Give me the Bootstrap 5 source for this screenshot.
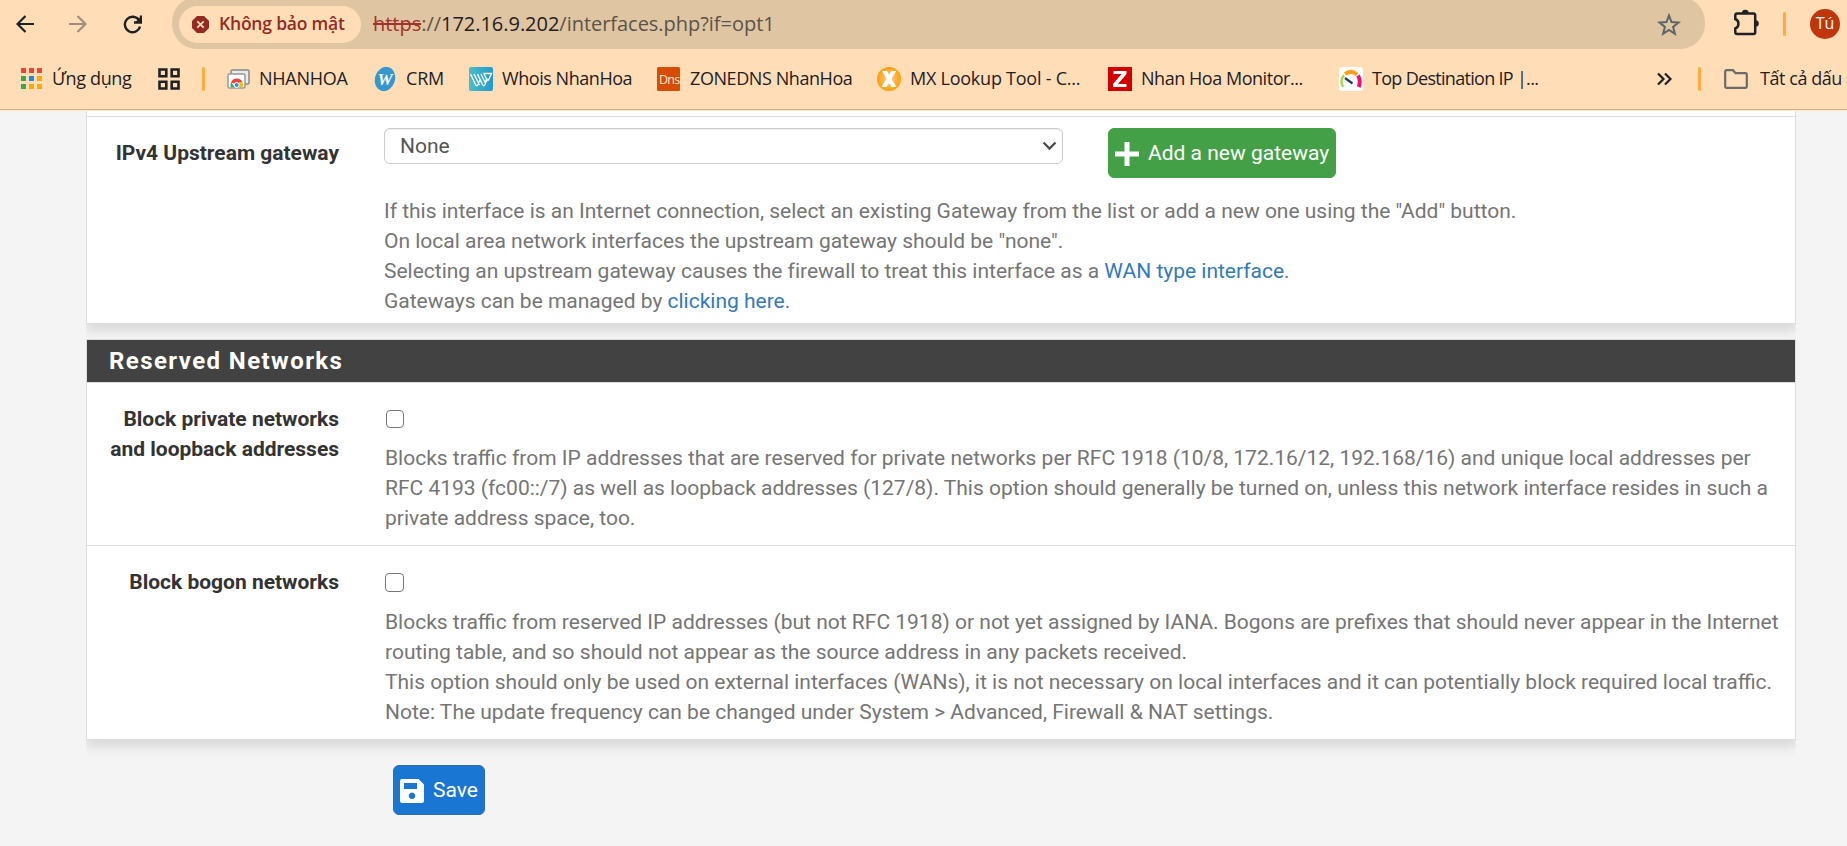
<!DOCTYPE html>
<html lang="vi">
<head>
<meta charset="utf-8">
<title>Interfaces</title>
<link href="https://cdn.jsdelivr.net/npm/bootstrap@5.3.0/dist/css/bootstrap.min.css" rel="stylesheet">
<style>
body{background:#f4f4f4;font-family:Roboto,"Liberation Sans",sans-serif;font-size:21px;line-height:30px;color:#333;height:846px;overflow:hidden}
.chrome{background:#ffdeb7;height:111px;border-bottom:1px solid #ffe6c8;font-family:"Open Sans","Noto Sans",sans-serif;color:#1f2023}
.chrome-in{height:110px;border-bottom:1px solid #d3af8d}
.toolbar-row{height:48px}
.toolbar-row svg,.marks svg{flex:none;display:block}
.omni{width:1533px;margin-left:172px;background:#dfc5a1;border-radius:25px;padding:3px 24px 1px 7px;height:52px;margin-top:-3px;margin-bottom:-1px}
.navs{width:172px;margin-right:-172px;padding-left:16px}
.chip{width:182px;height:37px;border-radius:19px;background:#ffdeb7;color:#932a24;font-weight:600;font-size:17.5px;padding-left:13px;letter-spacing:-.2px}
.url{font-size:20px;margin-left:12px;color:#5b5349;letter-spacing:-.03px;padding-bottom:1px}
.url s{color:#a1332b}
.url b{font-weight:400;color:#1f2023}
.chip-t{padding-bottom:2px}
.vbar{width:3px;height:24px;border-radius:2px;background:#ffab40;flex:none}
.avatar{width:30px;height:30px;border-radius:50%;background:#bf360c;color:#fff;font-size:16px;line-height:28px}
.marks{height:61px;font-size:18px;padding-left:21px;white-space:nowrap;display:grid;align-items:center;grid-template-columns:137px 44px 25px 147px 95px 188px 220px 231px 231px 318px 41px 26px 123px}
.marks>div{display:flex;align-items:center}
.marks span{padding-bottom:2px}
.shell{width:1710px;margin-left:86px}
.pnl{background:#fff;border:1px solid #ddd;box-shadow:0 6px 12px rgba(0,0,0,.13);clip-path:inset(0 0 -20px 0)}
.pnl-title{background:#424242;color:#fff;height:43px;border-bottom:1px solid #ddd;font-weight:700;font-size:24px;line-height:43px;letter-spacing:1.42px;padding-left:22px}
.lbl{width:252px;font-weight:700;text-align:right;flex:none;letter-spacing:-.01px}
.hlp{color:#757575}
.hlp a{color:#337ab7;text-decoration:none}
.hlp-up{letter-spacing:-.01px}
.sel{width:679px;height:36px;border:1px solid #ccc;border-radius:6px;box-shadow:inset 0 1px 1px rgba(0,0,0,.075);color:#555;padding:0 5px 0 15px;line-height:32px}
.cbx{width:18px;height:18px;border:1.500px solid #767676;border-radius:4px;background:#fff;appearance:none;display:block;margin:0 0 0 .5px}
.cbx-lg{width:19px;height:19px;margin-left:0}
.act{height:50px;border-radius:6px;color:#fff!important;font-size:21px;line-height:30px;padding:0 6px;border:1px solid #43a047;background:#43a047!important}
.act-save{background:#1976d2!important;border-color:#2e6da4}
</style>
</head>
<body>
<header class="chrome"><div class="chrome-in">
<div class="toolbar-row d-flex align-items-center">
 <div class="navs d-flex align-items-center">
  <svg width="18" height="18" viewBox="0 0 18 18" fill="none" stroke="#1f2023" stroke-width="2.2"><path d="M18 9H2M9.500 1L1.500 9l8 8"/></svg>
  <svg class="ms-auto" style="margin-right:36px" width="18" height="18" viewBox="0 0 18 18" fill="none" stroke="#a38d76" stroke-width="2.2"><path d="M0 9h16M8.500 1l8 8-8 8"/></svg>
  <svg style="margin-right:30px" width="19" height="19" viewBox="0 0 19 19" fill="none" stroke="#1f2023" stroke-width="2.4"><path d="M16 5.200A7.700 7.700 0 1 0 17 11.500"/><path d="M11 7.500h7V.5"/><path d="M17.500 2v5h-5z" fill="#1f2023" stroke="none"/></svg>
 </div>
 <div class="omni d-flex align-items-center flex-shrink-0">
  <div class="chip d-flex align-items-center">
   <svg width="17" height="17" viewBox="0 0 17 17" style="margin-right:10px"><path d="M5 0h7l5 5v7l-5 5H5l-5-5V5z" fill="#932a24"/><path d="M5.300 5.300l6.400 6.400M11.700 5.300l-6.400 6.400" stroke="#ffdeb7" stroke-width="1.8"/></svg>
   <span class="chip-t">Không bảo mật</span></div>
  <div class="url"><s>https</s>://<b>172.16.9.202</b>/interfaces.php?if=opt1</div>
  <svg class="ms-auto" width="24" height="23" viewBox="0 0 24 23" fill="none" stroke="#5f6368" stroke-width="2"><path d="M12 2.500l2.500 6.500 7 .5-5.400 4.400 1.800 6.900L12 17l-5.900 3.800 1.800-6.900L2.500 9.500l7-.5z"/></svg>
 </div>
 <svg style="margin-left:29px;margin-top:-3px" width="25" height="27" viewBox="0 0 25 27"><path d="M2.800 4.500h16.900a1.500 1.500 0 0 1 1.500 1.500v17.500a1.500 1.500 0 0 1-1.500 1.500H2.800a1.500 1.500 0 0 1-1.500-1.500V19.500c4.200-1.500 4.200-8 0-9.500V6a1.500 1.500 0 0 1 1.500-1.500z" fill="none" stroke="#1f2023" stroke-width="2.500"/><path d="M8 4a3.300 3.300 0 0 1 6.600 0zM21.500 11.200a3.300 3.300 0 0 1 0 6.600z" fill="#1f2023"/></svg>
 <div class="vbar" style="margin-left:24px"></div>
 <div class="avatar text-center flex-shrink-0" style="margin-left:24px">Tú</div>
</div>
<div class="marks">
 <div><svg width="21" height="21" viewBox="0 0 21 21"><path fill="#f44336" d="M0 0h5v5H0zM8 0h5v5H8zM16 0h5v5h-5z"/><path fill="#34a853" d="M0 8h5v5H0zM0 16h5v5H0z"/><path fill="#1e88e5" d="M8 8h5v5H8z"/><path fill="#f9ab00" d="M16 8h5v5h-5zM8 16h5v5H8zM16 16h5v5h-5z"/></svg><span style="margin-left:10px;letter-spacing:-.35px">Ứng dụng</span></div>
 <div><svg width="22" height="22" viewBox="0 0 22 22" fill="none" stroke="#1f2023" stroke-width="2.600"><path d="M1.500 1.500h6.800v6.800H1.500zM13.700 1.500h6.800v6.800h-6.800zM1.500 13.700h6.800v6.800H1.500zM13.700 13.700h6.800v6.800h-6.800z"/></svg></div>
 <div><div class="vbar"></div></div>
 <div><svg width="23" height="20" viewBox="0 0 23 20"><rect x="4" y="1" width="18" height="14" rx="1.500" fill="#e8eaed" stroke="#888" stroke-width="1.500"/><rect x="1" y="5" width="17" height="14" rx="1.500" fill="#fff" stroke="#999" stroke-width="1.500"/><path d="M4 13.500a6.200 6.200 0 0 1 11.500 0l-5.700 2z" fill="#ea4335"/><path d="M4 18.300a6 6 0 0 1 0-5l4 5z" fill="#34a853"/><path d="M15.300 13a6 6 0 0 1 .2 5.300H11l1-5.300z" fill="#fbbc04"/><circle cx="9.700" cy="16" r="2.500" fill="#4285f4" stroke="#fff"/></svg><span style="margin-left:9px;letter-spacing:-.25px">NHANHOA</span></div>
 <div><svg width="22" height="24" viewBox="0 0 22 24"><ellipse cx="11" cy="12" rx="10" ry="12.300" transform="rotate(18 11 12)" fill="#3498cf"/><text x="11" y="18" text-anchor="middle" font-family="Liberation Serif,serif" font-style="italic" font-weight="700" font-size="17" fill="#fff">W</text></svg><span style="margin-left:10px;letter-spacing:-.2px">CRM</span></div>
 <div><svg width="24" height="24" viewBox="0 0 24 24"><defs><linearGradient id="wg"><stop stop-color="#4dbdc3"/><stop offset="1" stop-color="#2199cf"/></linearGradient></defs><rect width="24" height="24" rx="2" fill="url(#wg)"/><path d="M1.500 7l5 10.500q1.300 2.500 2.500 0L11.500 12M5 7l5.500 11M8.500 7l5 10.500q1.300 2.500 2.500 0l2-4.500h1.500l3-6.500H15l2.500 5.500M12 7l4 8.500L18 11" fill="none" stroke="#fff" stroke-width="1.300"/></svg><span style="margin-left:9px;letter-spacing:-.45px">Whois NhanHoa</span></div>
 <div><svg width="23" height="24" viewBox="0 0 23 24"><rect width="23" height="24" rx="1.500" fill="#d64d00"/><text x="2" y="16.500" letter-spacing="-.8" font-size="12.500" font-family="Open Sans,sans-serif" fill="#ffe6d5">Dns</text></svg><span style="margin-left:10px;letter-spacing:-.42px">ZONEDNS NhanHoa</span></div>
 <div><svg width="24" height="24" viewBox="0 0 24 24"><defs><radialGradient id="xg"><stop stop-color="#ffd596"/><stop offset="1" stop-color="#ff9d0a"/></radialGradient></defs><circle cx="12" cy="12" r="12" fill="url(#xg)"/><path d="M5 4h5l2 4 2-4h5l-4.500 8 5 8h-5L12 16l-2.500 4h-5l5-8z" fill="#fff"/></svg><span style="margin-left:9px;letter-spacing:-.24px">MX Lookup Tool - C...</span></div>
 <div><svg width="24" height="24" viewBox="0 0 24 24"><path fill="#d40000" d="M0 0h24v24H0z"/><path d="M5.500 4h13v3L10 17h8.500v3H5v-3L13.500 7h-8z" fill="#fff"/></svg><span style="margin-left:9px;letter-spacing:-.46px">Nhan Hoa Monitor...</span></div>
 <div><svg width="24" height="24" viewBox="0 0 24 24" fill="none"><rect width="24" height="24" rx="3" fill="#fff"/><path d="M4 20Q.5 13.500 5 8" stroke="#a6d13a" stroke-width="2.200"/><path d="M6 7q6-4.500 12 .5" stroke="#ff9f1a" stroke-width="4"/><path d="M19 8.500q3 5 .8 11.500" stroke="#f5106b" stroke-width="4"/><path d="M6 11l7.500 5.500" stroke="#26375f" stroke-width="2.200"/></svg><span style="margin-left:9px;letter-spacing:-.7px">Top Destination IP |...</span></div>
 <div><svg width="15" height="14" viewBox="0 0 15 14" fill="none" stroke="#1f2023" stroke-width="2.200"><path d="M1 1.500L6.500 7 1 12.500M8 1.500L13.500 7 8 12.500"/></svg></div>
 <div><div class="vbar"></div></div>
 <div><svg width="24" height="20" viewBox="0 0 24 20" fill="none" stroke="#6b6b6b" stroke-width="2.200"><path d="M2.500 1.200h6.500l2.500 3h10a1.300 1.300 0 0 1 1.300 1.300V17.500a1.300 1.300 0 0 1-1.300 1.300h-19a1.300 1.300 0 0 1-1.300-1.300V2.500a1.300 1.300 0 0 1 1.300-1.300z"/></svg><span style="margin-left:12px;letter-spacing:-.45px">Tất cả dấu</span></div>
</div>
</div></header>
<main class="shell">
 <section class="pnl border-top-0">
  <div style="height:5px"></div>
  <div class="border-top d-flex" style="height:207px;padding-top:11px;border-color:#ddd!important">
   <div class="lbl" style="padding-top:10px">IPv4 Upstream gateway</div>
   <div style="margin-left:45px">
    <div class="d-flex" style="height:68px">
     <div class="sel d-flex align-items-center"><span>None</span><svg class="ms-auto" width="15" height="10" viewBox="0 0 15 10" fill="none" stroke="#4b4b4b" stroke-width="2.300"><path d="M1.500 1.500l6 6 6-6"/></svg></div>
     <a class="btn act d-flex align-items-center" style="margin-left:45px" href="#"><svg width="24" height="24" viewBox="0 0 24 24" style="margin:2px 9px 0 0"><path d="M9.500 0h5v9.500H24v5h-9.500V24h-5v-9.500H0v-5h9.500z" fill="#fff"/></svg>Add a new gateway</a>
    </div>
    <div class="hlp hlp-up">If this interface is an Internet connection, select an existing Gateway from the list or add a new one using the "Add" button.<br>On local area network interfaces the upstream gateway should be "none".<br>Selecting an upstream gateway causes the firewall to treat this interface as a <a href="#">WAN type interface</a>.<br>Gateways can be managed by <a href="#">clicking here</a>.</div>
   </div>
  </div>
 </section>
 <section class="pnl" style="margin-top:15px">
  <div class="pnl-title">Reserved Networks</div>
  <div class="d-flex" style="height:162px;padding-top:21px">
   <div class="lbl">Block private networks<br>and loopback addresses</div>
   <div style="margin-left:46px;padding-top:6px"><input type="checkbox" class="cbx"><div class="hlp text-nowrap" style="margin-top:15px">Blocks traffic from IP addresses that are reserved for private networks per RFC 1918 (10/8, 172.16/12, 192.168/16) and unique local addresses per<br>RFC 4193 (fc00::/7) as well as loopback addresses (127/8). This option should generally be turned on, unless this network interface resides in such a<br>private address space, too.</div></div>
  </div>
  <div class="d-flex border-top" style="height:194px;padding-top:21px;border-color:#ddd!important">
   <div class="lbl">Block bogon networks</div>
   <div style="margin-left:46px;padding-top:6px"><input type="checkbox" class="cbx cbx-lg"><div class="hlp text-nowrap" style="margin-top:15px">Blocks traffic from reserved IP addresses (but not RFC 1918) or not yet assigned by IANA. Bogons are prefixes that should never appear in the Internet<br>routing table, and so should not appear as the source address in any packets received.<br>This option should only be used on external interfaces (WANs), it is not necessary on local interfaces and it can potentially block required local traffic.<br>Note: The update frequency can be changed under System &gt; Advanced, Firewall &amp; NAT settings.</div></div>
  </div>
 </section>
 <button class="btn act act-save d-flex align-items-center" style="margin:25px 0 0 307px"><svg width="24" height="24" viewBox="0 0 24 24" style="margin:2px 9px 0 0"><path fill="#fff" fill-rule="evenodd" d="M2 0h16.500L24 5.500V22a2 2 0 0 1-2 2H2a2 2 0 0 1-2-2V2a2 2 0 0 1 2-2zM4 4v6h13V4zM12 13.500a3.300 3.300 0 1 0 .01 0z"/></svg>Save</button>
</main>
<script src="https://cdn.jsdelivr.net/npm/bootstrap@5.3.0/dist/js/bootstrap.bundle.min.js"></script>
</body>
</html>
